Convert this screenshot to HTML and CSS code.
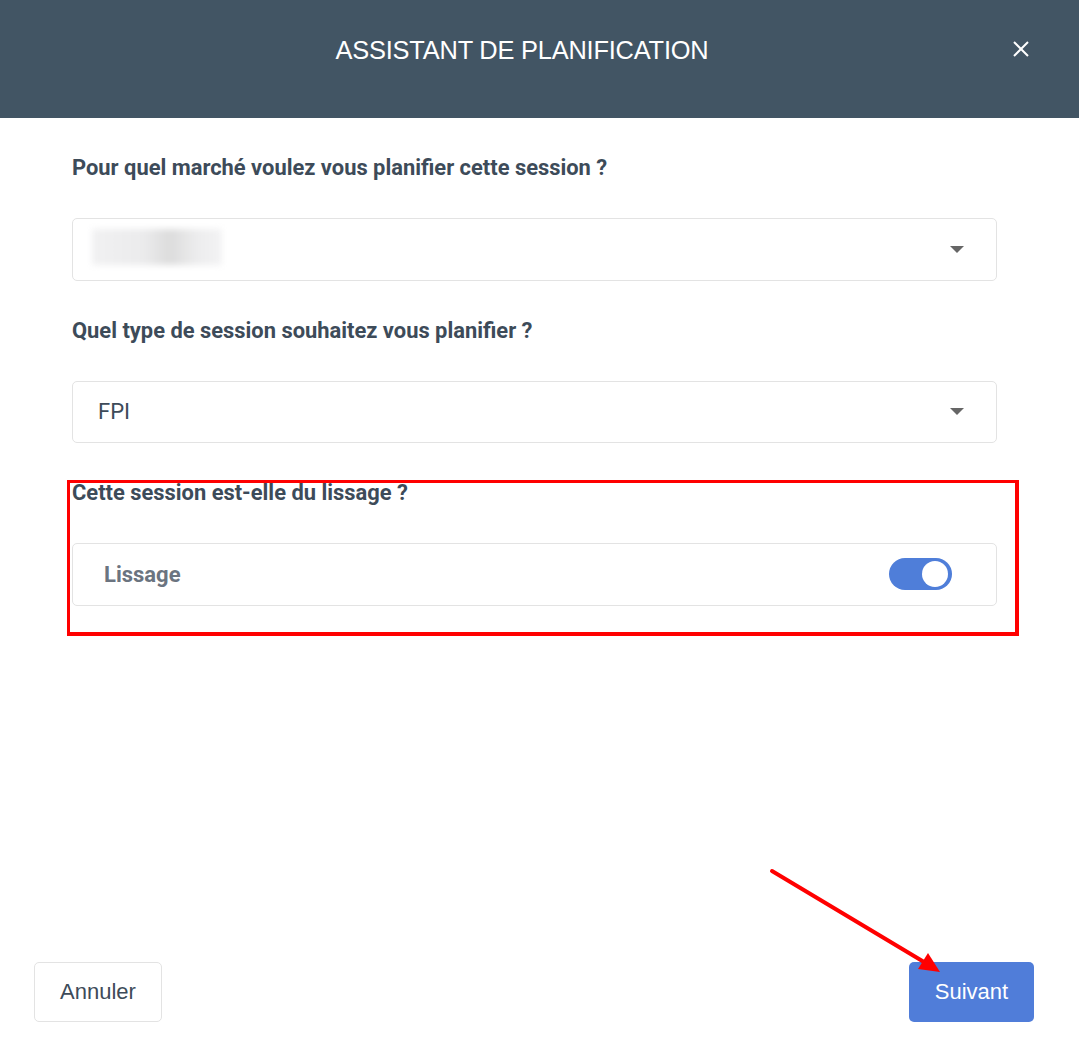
FILE: index.html
```html
<!DOCTYPE html>
<html lang="fr">

<head>
    <meta charset="UTF-8">
    <meta name="viewport" content="width=device-width, initial-scale=1.0">
    <title>Assistant de planification</title>
    <link rel="stylesheet" href="styles.css">
</head>

<body>
    <div class="modal">
        <header class="modal-header">
            <h1>ASSISTANT DE PLANIFICATION</h1>
            <button class="close" aria-label="Fermer">
                <svg width="18" height="18" viewBox="0 0 18 18">
                    <path d="M2 2 L16 16 M16 2 L2 16" stroke="#fff" stroke-width="2" fill="none" />
                </svg>
            </button>
        </header>

        <div class="modal-body">
            <div class="field">
                <label>Pour quel marché voulez vous planifier cette session ?</label>
                <div class="select">
                    <span class="blurred"></span>
                    <span class="caret"></span>
                </div>
            </div>

            <div class="field">
                <label>Quel type de session souhaitez vous planifier ?</label>
                <div class="select">
                    <span class="value">FPI</span>
                    <span class="caret"></span>
                </div>
            </div>

            <div class="field">
                <label>Cette session est-elle du lissage ?</label>
                <div class="select switch-row">
                    <span class="switch-label">Lissage</span>
                    <span class="toggle"><span class="knob"></span></span>
                </div>
            </div>
        </div>

        <footer class="modal-footer">
            <button class="btn btn-cancel">Annuler</button>
            <button class="btn btn-next">Suivant</button>
        </footer>
    </div>

    <!-- annotations -->
    <div class="highlight"></div>
    <svg class="arrow" width="1079" height="1056" viewBox="0 0 1079 1056">
        <line x1="772" y1="871" x2="924" y2="962" stroke="#ff0000" stroke-width="4" stroke-linecap="round" />
        <polygon points="940,972 918,969 928,953" fill="#ff0000" />
    </svg>
</body>

</html>
```

FILE: styles.css
```css
* {
    box-sizing: border-box;
}

body {
    margin: 0;
    padding: 0;
    background: #fff;
    font-family: Roboto, "Liberation Sans", Arial, sans-serif;
}

.modal {
    display: flex;
    flex-direction: column;
    min-height: 1056px;
}

.modal-header {
    height: 118px;
    background-color: #425564;
    display: flex;
    align-items: center;
    justify-content: center;
    position: relative;
    padding: 0 35px 18px 0;
}

.modal-header h1 {
    margin: 0;
    color: #fff;
    font-family: "Liberation Sans", Arial, sans-serif;
    font-weight: normal;
    font-size: 25.4px;
    letter-spacing: -0.2px;
}

.close {
    position: absolute;
    right: 49px;
    top: 40px;
    background: none;
    border: none;
    padding: 0;
    width: 18px;
    height: 18px;
    cursor: pointer;
}

.modal-body {
    flex: 1;
    padding: 37px 82px 0 72px;
}

.field {
    margin-bottom: 37px;
}

.field label {
    display: block;
    font-size: 21.9px;
    line-height: 26px;
    font-weight: 700;
    color: #3d4b59;
    margin-bottom: 37px;
}

.select {
    height: 62.5px;
    border: 1px solid #e3e3e3;
    border-radius: 5px;
    display: flex;
    align-items: center;
    justify-content: space-between;
    padding: 0 30px 0 25px;
}

.value {
    font-size: 22px;
    color: #3d4b59;
}

.blurred {
    display: block;
    width: 130px;
    height: 36px;
    margin-left: -6px;
    margin-bottom: 4px;
    background: linear-gradient(90deg, #f1f1f2 0%, #ebebec 40%, #dcdcdc 60%, #ececed 80%, #f3f3f4 100%);
    filter: blur(3px);
}

.caret {
    width: 0;
    height: 0;
    border-left: 7px solid transparent;
    border-right: 7px solid transparent;
    border-top: 7px solid #666;
    margin-right: 2px;
}

.switch-row {
    padding: 0 44px 0 31px;
}

.switch-label {
    font-size: 22px;
    font-weight: 700;
    color: #6b7480;
}

.toggle {
    width: 63px;
    height: 32px;
    border-radius: 16px;
    background-color: #4f7ed9;
    display: flex;
    align-items: center;
    justify-content: flex-end;
    padding-right: 4px;
}

.knob {
    width: 26px;
    height: 26px;
    border-radius: 50%;
    background: #fff;
}

.modal-footer {
    display: flex;
    justify-content: space-between;
    padding: 0 45px 34px 34px;
}

.btn {
    height: 60px;
    border-radius: 5px;
    font-family: "Liberation Sans", Arial, sans-serif;
    font-size: 22px;
    cursor: pointer;
}

.btn-cancel {
    width: 128px;
    background: #fff;
    border: 1px solid #e3e3e3;
    color: #3d4b59;
}

.btn-next {
    width: 125px;
    background: #507dd9;
    border: none;
    color: #fff;
}

.highlight {
    position: absolute;
    left: 67px;
    top: 480px;
    width: 952px;
    height: 156px;
    border-style: solid;
    border-color: #ff0000;
    border-width: 3px 4px 4px 3px;
}

.arrow {
    position: absolute;
    left: 0;
    top: 0;
    pointer-events: none;
}
```
